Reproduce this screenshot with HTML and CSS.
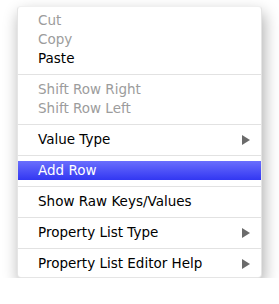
FILE: index.html
```html
<!DOCTYPE html>
<html lang="en">
<head>
  <meta charset="UTF-8" />
  <title>Context Menu</title>
  <link rel="stylesheet" href="styles.css">
</head>
<body>
  <div class="menu">
    <div class="item disabled">Cut</div>
    <div class="item disabled">Copy</div>
    <div class="item">Paste</div>
    <div class="sep"></div>
    <div class="item disabled">Shift Row Right</div>
    <div class="item disabled">Shift Row Left</div>
    <div class="sep"></div>
    <div class="item sub">Value Type <span class="arrow"></span></div>
    <div class="sep"></div>
    <div class="item active">Add Row</div>
    <div class="sep"></div>
    <div class="item">Show Raw Keys/Values</div>
    <div class="sep"></div>
    <div class="item sub">Property List Type <span class="arrow"></span></div>
    <div class="sep"></div>
    <div class="item sub">Property List Editor Help <span class="arrow"></span></div>
  </div>
</body>
</html>
```

FILE: styles.css
```css
body {
  margin: 0;
  background: #fff;
  font-family: 'DejaVu Sans', sans-serif;
  font-size: 13.5px;
}
.menu {
  margin: 6px 0 0 17px;
  width: 245px;
  padding: 4px 0;
  background: #fff;
  border: 1px solid rgba(0,0,0,0.1);
  border-top-color: rgba(0,0,0,0.06);
  border-radius: 4px;
  box-shadow: 2px 7px 16px rgba(0,0,0,0.33);
  box-sizing: border-box;
}
.item {
  height: 19px;
  line-height: 19px;
  padding: 0 11px 0 20px;
  color: #000;
  display: flex;
  align-items: center;
  justify-content: space-between;
  white-space: nowrap;
}
.item.disabled { color: #9c9c9c; }
.item.active {
  background: linear-gradient(#6a6efd, #3237f2);
  color: #fff;
}
.sep {
  height: 1px;
  background: #e2e2e2;
  margin: 6px 0 5px;
}
.arrow {
  width: 0; height: 0;
  border-top: 5.5px solid transparent;
  border-bottom: 5.5px solid transparent;
  border-left: 8px solid #6b6b6b;
}
```
